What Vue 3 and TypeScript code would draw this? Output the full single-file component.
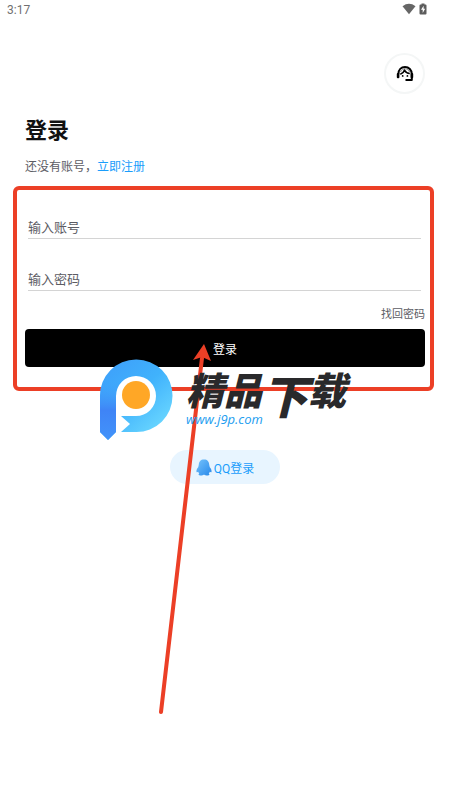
<script setup lang="ts">
import { ref } from 'vue'

const account = ref('')
const password = ref('')
const time = '3:17'
</script>

<template>
  <div class="page">
    <header class="status">
      <span>{{ time }}</span>
      <span class="status-icons">
        <svg width="14" height="12" viewBox="0 0 14 12" aria-hidden="true">
          <path d="M0.5 3.2Q7 -1.6 13.5 3.2L7 11.2Z" fill="#666" />
        </svg>
        <svg width="8" height="12" viewBox="0 0 8 12" aria-hidden="true">
          <path d="M2.5 0.5H5.5V1.5H6.5Q7.5 1.5 7.5 2.5V10.5Q7.5 11.5 6.5 11.5H1.5Q0.5 11.5 0.5 10.5V2.5Q0.5 1.5 1.5 1.5H2.5Z" fill="#5c5c5c" />
          <path d="M4.6 2.8L2 6.8H3.7V10L6.2 5.8H4.6Z" fill="#fff" />
        </svg>
      </span>
    </header>

    <main class="content">
      <button class="service" type="button" aria-label="客服">
        <svg width="18" height="18" viewBox="0 0 18 18" fill="none" aria-hidden="true">
          <path d="M2.4 9C2.4 4.800 5.200 2 9 2S15.800 4.800 15.800 9V15H9.500" stroke="#000" stroke-width="2" stroke-linejoin="round" />
          <rect x="0.800" y="8" width="2.600" height="5.200" rx="1" fill="#000" />
          <rect x="14.600" y="8" width="2.600" height="5.200" rx="1" fill="#000" />
          <path d="M4.300 9.200C6.300 8.500 7.800 7.200 8.400 5.200C9.500 7.200 11.300 8.500 13.800 8.500" stroke="#000" stroke-width="1.600" />
          <path d="M4.500 7C5.500 4.500 7 3.900 9 3.900S12.700 4.800 13.600 7" stroke="#888" stroke-width="1" />
          <circle cx="6.700" cy="10.900" r="0.900" fill="#000" />
          <circle cx="11.400" cy="10.900" r="0.900" fill="#000" />
        </svg>
      </button>

      <h1>登录</h1>
      <p class="register">还没有账号，<a href="#register">立即注册</a></p>

      <form class="form" @submit.prevent>
        <label class="field">
          <input v-model="account" type="text" placeholder="输入账号" aria-label="输入账号" />
        </label>
        <label class="field">
          <input v-model="password" type="password" placeholder="输入密码" aria-label="输入密码" />
        </label>
        <a class="forgot" href="#forgot">找回密码</a>
        <button class="submit" type="submit">登录</button>

        <div class="frame"></div>
        <svg class="arrow" width="56" height="376" viewBox="0 0 56 376" aria-hidden="true">
          <path d="M6 372L47 18" stroke="#ec3f26" stroke-width="4" stroke-linecap="round" />
          <path d="M49 4L38 20L47 17L56 21Z" fill="#ec3f26" />
        </svg>
        <div class="brand">
          <svg width="75" height="82" viewBox="0 0 75 82" aria-hidden="true">
            <defs>
              <linearGradient id="ring" x1="0" y1="0" x2="0.8" y2="1">
                <stop offset="0" stop-color="#3d9cfa" />
                <stop offset="0.5" stop-color="#40b2fc" />
                <stop offset="1" stop-color="#70dcff" />
              </linearGradient>
              <linearGradient id="stem" gradientUnits="userSpaceOnUse" x1="0" y1="22" x2="0" y2="81">
                <stop offset="0" stop-color="#3f9dfa" stop-opacity="0" />
                <stop offset="0.5" stop-color="#3f84f6" />
                <stop offset="1" stop-color="#4293fa" />
              </linearGradient>
            </defs>
            <circle cx="37" cy="37" r="25" fill="#fff" />
            <path d="M1 37A36 36 0 0 1 37 0.500A36 36 0 0 1 73.500 37A36 36 0 0 1 37 73H22L31 65L22 57H37A20 20 0 1 0 17 37V73L9 81L1 73Z" fill="url(#ring)" />
            <path d="M1 37Q1 29 4 22H23Q17 27 17 37V73L9 81L1 73Z" fill="url(#stem)" />
            <circle cx="37" cy="36" r="14" fill="#ffa726" />
          </svg>
          <div class="brand-text">
            <span class="brand-name">精品<span class="tall">下</span>载</span>
            <span class="brand-url">www.j9p.com</span>
          </div>
        </div>
      </form>

      <button class="qq" type="button">
        <svg width="16" height="17" viewBox="0 0 16 17" aria-hidden="true">
          <defs>
            <linearGradient id="penguin" x1="0" y1="0" x2="1" y2="1">
              <stop offset="0" stop-color="#75c3fc" />
              <stop offset="1" stop-color="#2688ea" />
            </linearGradient>
          </defs>
          <path d="M8 0.500C11.500 0.500 13 2.600 13.200 5.500C13.300 6.500 13.600 7.500 13.800 8.300C15 9.700 15.900 11.500 15.500 12.900C15.100 13.400 14.300 13 13.800 12.700C13.600 13.400 13.200 13.900 12.700 14.200C14 15 13.500 16.500 11.600 16.500C10 16.500 8.700 16.200 8 15.500C7.300 16.200 6 16.500 4.400 16.500C2.500 16.500 2 15 3.300 14.200C2.800 13.900 2.400 13.400 2.200 12.700C1.700 13 0.900 13.400 0.500 12.900C0.100 11.500 1 9.700 2.200 8.300C2.400 7.500 2.700 6.500 2.800 5.500C3 2.600 4.500 0.500 8 0.500Z" fill="url(#penguin)" />
        </svg>
        <span>QQ登录</span>
      </button>
    </main>
  </div>
</template>

<style>
body {
  background: #fff;
}
</style>

<style scoped>
.page {
  min-height: 100vh;
  overflow: hidden;
  font-family: Roboto, "Noto Sans CJK SC", sans-serif;
  font-size: 12px;
  color: #5c5c64;
}
.page *,
.page {
  box-sizing: border-box;
}
a {
  color: #1a9dfb;
  text-decoration: none;
}
button {
  border: 0;
  padding: 0;
  font: inherit;
  cursor: pointer;
}
.status {
  display: flex;
  justify-content: space-between;
  align-items: center;
  height: 20px;
  padding: 0 23px 0 7px;
  color: #707070;
}
.status-icons {
  display: flex;
  align-items: center;
  gap: 3px;
  height: 20px;
  padding-bottom: 2px;
}
.content {
  display: flex;
  flex-direction: column;
  padding: 33px 25px 0;
}
.service {
  display: grid;
  place-items: center;
  align-self: flex-end;
  width: 41px;
  height: 41px;
  border: 2px solid #f4f6f6;
  border-radius: 50%;
  background: #fff;
}
h1 {
  margin: 21px 0 0;
  font-size: 22px;
  line-height: 32px;
  font-weight: 700;
  color: #111;
}
.register {
  margin: 12px 0 0;
  line-height: 16px;
}
.form {
  position: relative;
  display: flex;
  flex-direction: column;
  margin-top: 12px;
}
.field {
  display: flex;
  height: 52px;
  padding: 0 4px 0 3px;
}
.field input {
  width: 100%;
  height: 52px;
  padding: 30px 0 0;
  border: 0;
  border-bottom: 1px solid #d4d4d4;
  border-radius: 0;
  outline: 0;
  background: transparent;
  font: inherit;
  font-size: 13px;
  color: #222;
}
.field input::placeholder {
  color: #5c5c64;
  opacity: 1;
}
.forgot {
  align-self: flex-end;
  margin-top: 16px;
  font-size: 11px;
  line-height: 16px;
  color: #5c5c64;
}
.submit {
  height: 38px;
  margin-top: 6px;
  border-radius: 4px;
  background: #000;
  color: #fff;
}
.frame {
  position: absolute;
  top: -1px;
  left: -12px;
  right: -9px;
  height: 205px;
  border: 4px solid #ec3f26;
  border-radius: 6px;
  pointer-events: none;
}
.arrow {
  position: absolute;
  top: 153px;
  left: 130px;
  pointer-events: none;
}
.brand {
  position: absolute;
  top: 172px;
  left: 74px;
  display: flex;
  gap: 12px;
  pointer-events: none;
}
.brand-text {
  display: flex;
  flex-direction: column;
  padding-top: 12px;
  white-space: nowrap;
}
.brand-name {
  display: flex;
  align-items: flex-start;
  height: 40px;
  font-family: "Noto Sans CJK SC", sans-serif;
  font-size: 38px;
  line-height: 36px;
  font-weight: 900;
  font-style: italic;
  color: #29292b;
}
.tall {
  font-size: 46px;
  line-height: 46px;
}
.brand-url {
  font-family: "Open Sans", sans-serif;
  font-size: 13px;
  line-height: 16px;
  font-style: italic;
  color: #1c9df0;
}
.qq {
  display: flex;
  align-items: center;
  justify-content: center;
  align-self: center;
  gap: 2px;
  width: 110px;
  height: 34px;
  margin-top: 83px;
  border-radius: 17px;
  background: #e8f5ff;
  color: #1a9dfb;
}
</style>
